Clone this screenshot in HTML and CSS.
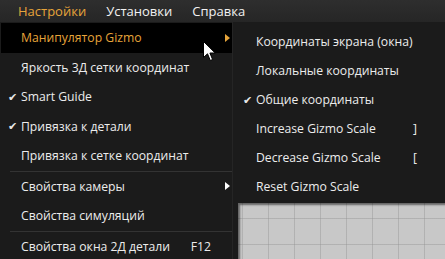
FILE: index.html
```html
<!DOCTYPE html>
<html>
<head>
<meta charset="utf-8">
<link rel="stylesheet" href="styles.css">
</head>
<body>
<div class="app">
  <div class="menubar">
    <span class="mb-item active">Настройки</span>
    <span class="mb-item">Установки</span>
    <span class="mb-item">Справка</span>
  </div>
  <div class="main">
    <div class="menu">
      <div class="item hl"><span class="label">Манипулятор Gizmo</span><span class="arrow orange"></span></div>
      <div class="item"><span class="label">Яркость 3Д сетки координат</span></div>
      <div class="item"><span class="check">✔</span><span class="label">Smart Guide</span></div>
      <div class="item"><span class="check">✔</span><span class="label">Привязка к детали</span></div>
      <div class="item"><span class="label">Привязка к сетке координат</span></div>
      <div class="sep"></div>
      <div class="item"><span class="label">Свойства камеры</span><span class="arrow"></span></div>
      <div class="item"><span class="label">Свойства симуляций</span></div>
      <div class="sep"></div>
      <div class="item"><span class="label">Свойства окна 2Д детали</span><span class="key">F12</span></div>
    </div>
    <div class="right">
      <div class="submenu">
        <div class="sitem"><span class="label">Координаты экрана (окна)</span></div>
        <div class="sitem"><span class="label">Локальные координаты</span></div>
        <div class="sitem"><span class="check">✔</span><span class="label">Общие координаты</span></div>
        <div class="sitem"><span class="label">Increase Gizmo Scale</span><span class="skey">]</span></div>
        <div class="sitem"><span class="label">Decrease Gizmo Scale</span><span class="skey">[</span></div>
        <div class="sitem"><span class="label">Reset Gizmo Scale</span></div>
      </div>
      <div class="canvas"></div>
    </div>
  </div>
  <svg class="cursor" width="14" height="21" viewBox="0 0 14 21">
    <path d="M0.5 0.5 L0.5 16.5 L4.5 12.8 L7.3 19.5 L9.6 18.5 L6.9 12 L12.2 12 Z" fill="#fff" stroke="#000" stroke-width="1" stroke-linejoin="miter"/>
  </svg>
</div>
</body>
</html>
```
FILE: styles.css
```css
html, body {
  margin: 0;
  padding: 0;
  background: #1b1b1b;
}
.app {
  position: relative;
  width: 445px;
  height: 259px;
  overflow: hidden;
  font-family: "Open Sans", "Noto Sans", sans-serif;
  font-size: 12.2px;
  color: #ececec;
}
.menubar {
  height: 22px;
  background: linear-gradient(#2e2e2e, #262626);
  display: flex;
  align-items: center;
  padding-left: 18px;
  gap: 20px;
  font-size: 13px;
}
.mb-item { color: #f2f2f2; }
.mb-item.active { color: #e6a43a; }
.main {
  display: flex;
  height: 237px;
}
.menu {
  width: 232px;
  background: #1b1b1b;
  border-right: 1px solid #252525;
  padding-top: 1px;
}
.item {
  position: relative;
  height: 29.5px;
  display: flex;
  align-items: center;
  padding-left: 21px;
  padding-right: 2px;
}
.item.hl {
  background: #000;
  color: #e6a43a;
  margin-left: 1px;
  padding-left: 20px;
}
.label { flex: 1; white-space: nowrap; }
.check {
  position: absolute;
  left: 8px;
  font-size: 10.5px;
  color: #e8e8e8;
}
.arrow {
  width: 0;
  height: 0;
  border-top: 4px solid transparent;
  border-bottom: 4px solid transparent;
  border-left: 5px solid #fff;
}
.arrow.orange { border-left-color: #e6a43a; }
.key { margin-right: 19px; }
.sep {
  height: 1px;
  background: #333;
  margin-left: 10px;
}
.right {
  flex: 1;
  display: flex;
  flex-direction: column;
}
.submenu {
  height: 181px;
  background: #1b1b1b;
  padding-top: 5px;
  box-sizing: border-box;
}
.sitem {
  position: relative;
  height: 29px;
  display: flex;
  align-items: center;
  padding-left: 23px;
}
.sitem .check { left: 10px; }
.skey { width: 32px; }
.canvas {
  flex: 1;
  margin-left: 5px;
  background-color: #c8c8c8;
  background-image:
    linear-gradient(to right, rgba(150,150,150,0.45) 1px, transparent 1px),
    linear-gradient(to bottom, rgba(150,150,150,0.45) 1px, transparent 1px);
  background-size: 26px 26px;
  background-position: 4px 15px;
  box-shadow: inset 2px 2px 2px rgba(0,0,0,0.5);
}
.cursor {
  position: absolute;
  left: 203px;
  top: 41px;
}
```
